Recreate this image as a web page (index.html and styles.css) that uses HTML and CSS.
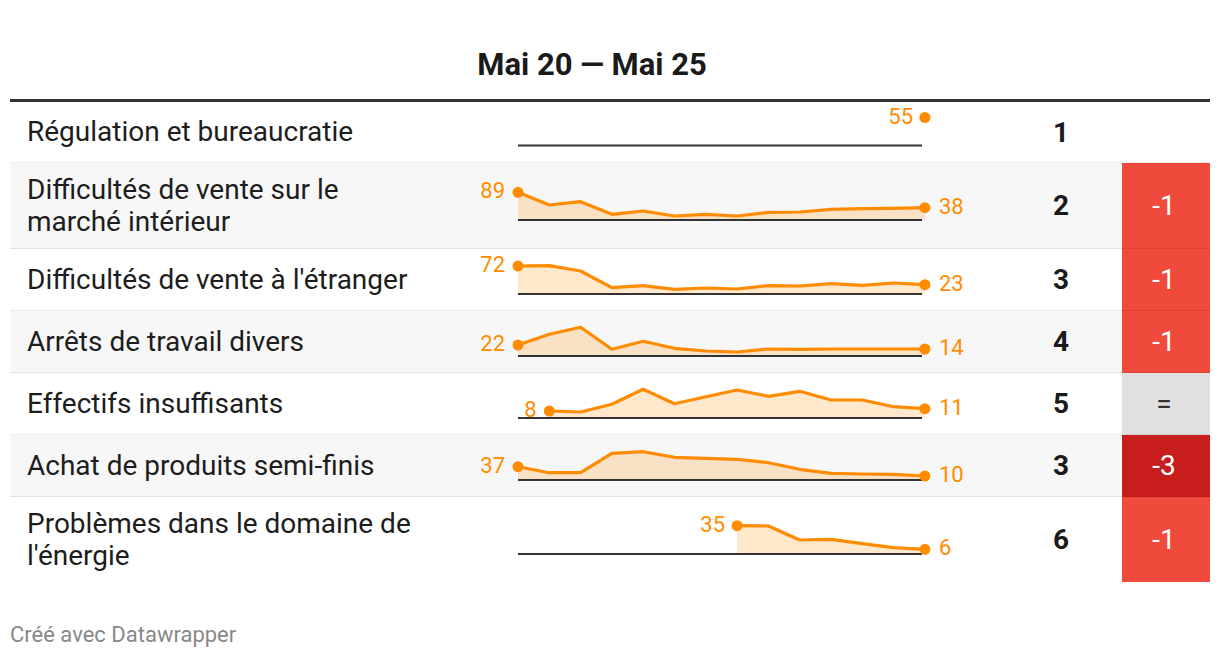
FILE: index.html
```html
<!DOCTYPE html>
<html lang="fr">
<head>
<meta charset="utf-8">
<title>Mai 20 — Mai 25</title>
<link rel="stylesheet" href="styles.css">
</head>
<body>
<div class="chart">
  <div class="title">Mai 20 — Mai 25</div>

  <div class="row first">
    <div class="cell name">Régulation et bureaucratie</div>
    <div class="cell spark">
      <svg width="570" height="60" viewBox="430 102 570 60">
        <line class="base" x1="518" y1="145.5" x2="922" y2="145.5"/>
        <circle class="dot" cx="924.9" cy="117.5" r="5.5"/>
        <text class="lbl" x="913" y="123.5" text-anchor="end">55</text>
      </svg>
    </div>
    <div class="cell rank">1</div>
    <div class="cell chg"></div>
  </div>

  <div class="row alt tall">
    <div class="cell name">Difficultés de vente sur le marché intérieur</div>
    <div class="cell spark">
      <svg width="570" height="85" viewBox="430 163 570 85">
        <polygon class="area" points="518,192.3 549.3,205 580.6,201.7 611.9,214.3 643.2,211 674.5,216 705.8,214.3 737.1,216 768.4,212.3 799.7,212 831,209.3 862.3,208.7 893.6,208.3 924.9,207.7 924.9,220 518,220"/>
        <line class="base" x1="518" y1="220" x2="922" y2="220"/>
        <polyline class="ln" points="518,192.3 549.3,205 580.6,201.7 611.9,214.3 643.2,211 674.5,216 705.8,214.3 737.1,216 768.4,212.3 799.7,212 831,209.3 862.3,208.7 893.6,208.3 924.9,207.7"/>
        <circle class="dot" cx="518" cy="192.3" r="5.5"/>
        <circle class="dot" cx="924.9" cy="207.7" r="5.5"/>
        <text class="lbl" x="505" y="198.3" text-anchor="end">89</text>
        <text class="lbl" x="939" y="213.7">38</text>
      </svg>
    </div>
    <div class="cell rank">2</div>
    <div class="cell chg down">-1</div>
  </div>

  <div class="row">
    <div class="cell name">Difficultés de vente à l'étranger</div>
    <div class="cell spark">
      <svg width="570" height="61" viewBox="430 249 570 61">
        <polygon class="area" points="518,266 549.3,265.7 580.6,271 611.9,287.7 643.2,285.7 674.5,289.3 705.8,288 737.1,289 768.4,285.7 799.7,286 831,283.7 862.3,285.3 893.6,283 924.9,284.7 924.9,294 518,294"/>
        <line class="base" x1="518" y1="294" x2="922" y2="294"/>
        <polyline class="ln" points="518,266 549.3,265.7 580.6,271 611.9,287.7 643.2,285.7 674.5,289.3 705.8,288 737.1,289 768.4,285.7 799.7,286 831,283.7 862.3,285.3 893.6,283 924.9,284.7"/>
        <circle class="dot" cx="518" cy="266" r="5.5"/>
        <circle class="dot" cx="924.9" cy="284.7" r="5.5"/>
        <text class="lbl" x="505" y="272" text-anchor="end">72</text>
        <text class="lbl" x="939" y="290.7">23</text>
      </svg>
    </div>
    <div class="cell rank">3</div>
    <div class="cell chg down">-1</div>
  </div>

  <div class="row alt">
    <div class="cell name">Arrêts de travail divers</div>
    <div class="cell spark">
      <svg width="570" height="61" viewBox="430 311 570 61">
        <polygon class="area" points="518,345 549.3,334.3 580.6,327.3 611.9,349.3 643.2,341.3 674.5,348.3 705.8,351 737.1,352 768.4,349 799.7,349.3 831,349 862.3,349 893.6,349 924.9,349 924.9,356 518,356"/>
        <line class="base" x1="518" y1="356" x2="922" y2="356"/>
        <polyline class="ln" points="518,345 549.3,334.3 580.6,327.3 611.9,349.3 643.2,341.3 674.5,348.3 705.8,351 737.1,352 768.4,349 799.7,349.3 831,349 862.3,349 893.6,349 924.9,349"/>
        <circle class="dot" cx="518" cy="345" r="5.5"/>
        <circle class="dot" cx="924.9" cy="349" r="5.5"/>
        <text class="lbl" x="505" y="351" text-anchor="end">22</text>
        <text class="lbl" x="939" y="355">14</text>
      </svg>
    </div>
    <div class="cell rank">4</div>
    <div class="cell chg down">-1</div>
  </div>

  <div class="row">
    <div class="cell name">Effectifs insuffisants</div>
    <div class="cell spark">
      <svg width="570" height="61" viewBox="430 373 570 61">
        <polygon class="area" points="549.3,411 580.6,412 611.9,404.3 643.2,389.3 674.5,403.7 705.8,396.7 737.1,390 768.4,396.3 799.7,391.3 831,400 862.3,400 893.6,406.7 924.9,408.7 924.9,418 549.3,418"/>
        <line class="base" x1="518" y1="418" x2="922" y2="418"/>
        <polyline class="ln" points="549.3,411 580.6,412 611.9,404.3 643.2,389.3 674.5,403.7 705.8,396.7 737.1,390 768.4,396.3 799.7,391.3 831,400 862.3,400 893.6,406.7 924.9,408.7"/>
        <circle class="dot" cx="549.3" cy="411" r="5.5"/>
        <circle class="dot" cx="924.9" cy="408.7" r="5.5"/>
        <text class="lbl" x="536.5" y="417" text-anchor="end">8</text>
        <text class="lbl" x="939" y="414.7">11</text>
      </svg>
    </div>
    <div class="cell rank">5</div>
    <div class="cell chg same">=</div>
  </div>

  <div class="row alt">
    <div class="cell name">Achat de produits semi-finis</div>
    <div class="cell spark">
      <svg width="570" height="61" viewBox="430 435 570 61">
        <polygon class="area" points="518,466.7 549.3,472.7 580.6,472.7 611.9,453.3 643.2,451.7 674.5,457.3 705.8,458.3 737.1,459.3 768.4,462.7 799.7,469.3 831,473.3 862.3,474 893.6,474.3 924.9,476 924.9,480 518,480"/>
        <line class="base" x1="518" y1="480" x2="922" y2="480"/>
        <polyline class="ln" points="518,466.7 549.3,472.7 580.6,472.7 611.9,453.3 643.2,451.7 674.5,457.3 705.8,458.3 737.1,459.3 768.4,462.7 799.7,469.3 831,473.3 862.3,474 893.6,474.3 924.9,476"/>
        <circle class="dot" cx="518" cy="466.7" r="5.5"/>
        <circle class="dot" cx="924.9" cy="476" r="5.5"/>
        <text class="lbl" x="505" y="472.7" text-anchor="end">37</text>
        <text class="lbl" x="939" y="482">10</text>
      </svg>
    </div>
    <div class="cell rank">3</div>
    <div class="cell chg down3">-3</div>
  </div>

  <div class="row tall last">
    <div class="cell name">Problèmes dans le domaine de l'énergie</div>
    <div class="cell spark">
      <svg width="570" height="85" viewBox="430 497 570 85">
        <polygon class="area" points="737.1,525.7 768.4,526 799.7,540 831,539.3 862.3,543.7 893.6,547.7 924.9,549.3 924.9,554 737.1,554"/>
        <line class="base" x1="518" y1="554" x2="922" y2="554"/>
        <polyline class="ln" points="737.1,525.7 768.4,526 799.7,540 831,539.3 862.3,543.7 893.6,547.7 924.9,549.3"/>
        <circle class="dot" cx="737.1" cy="525.7" r="5.5"/>
        <circle class="dot" cx="924.9" cy="549.3" r="5.5"/>
        <text class="lbl" x="725" y="531.7" text-anchor="end">35</text>
        <text class="lbl" x="939" y="555.3">6</text>
      </svg>
    </div>
    <div class="cell rank">6</div>
    <div class="cell chg down">-1</div>
  </div>

  <div class="footer">Créé avec Datawrapper</div>
</div>
</body>
</html>
```

FILE: styles.css
```css
html, body {
  margin: 0;
  padding: 0;
  background: #ffffff;
}

body {
  font-family: Roboto, "Liberation Sans", Arial, sans-serif;
  color: #1d1d1d;
}

.chart {
  width: 1200px;
  margin-left: 10px;
  padding-top: 47px;
}

.title {
  font-weight: 700;
  font-size: 31px;
  line-height: 36px;
  text-align: center;
  padding-right: 36px;
  padding-bottom: 16px;
  border-bottom: 3px solid #333333;
  color: #1a1a1a;
}

.row {
  display: grid;
  grid-template-columns: 420px 570px 122px 88px;
}

.row.alt {
  background: #f7f7f7;
}

.cell {
  height: 61px;
  display: flex;
  align-items: center;
  border-bottom: 1px solid rgba(0, 0, 0, 0.08);
}

.row.first .cell {
  height: 60px;
}

.row.tall .cell {
  height: 85px;
}

.row.last .cell {
  border-bottom: none;
}

.name {
  padding-left: 17px;
  padding-right: 15px;
  font-size: 28px;
  line-height: 32px;
  color: #1d1d1d;
}

.spark svg {
  display: block;
}

.area {
  fill: rgba(255, 140, 0, 0.2);
  stroke: none;
}

.base {
  stroke: #333333;
  stroke-width: 2;
}

.ln {
  fill: none;
  stroke: #ff8c00;
  stroke-width: 3.2;
  stroke-linejoin: round;
}

.dot {
  fill: #ff8c00;
}

.lbl {
  fill: #ff8c00;
  font-family: Roboto, "Liberation Sans", Arial, sans-serif;
  font-size: 22px;
}

.rank {
  justify-content: center;
  font-weight: 700;
  font-size: 28px;
  color: #1a1a1a;
}

.chg {
  justify-content: center;
  padding-right: 4px;
  font-size: 28px;
  color: #ffffff;
}

.chg.down {
  background: #ef4a3c;
}

.chg.down3 {
  background: #c71e1d;
}

.chg.same {
  background: #e0e0e0;
  color: #333333;
}

.footer {
  margin-top: 40px;
  font-size: 22px;
  line-height: 26px;
  color: #888888;
}
```
